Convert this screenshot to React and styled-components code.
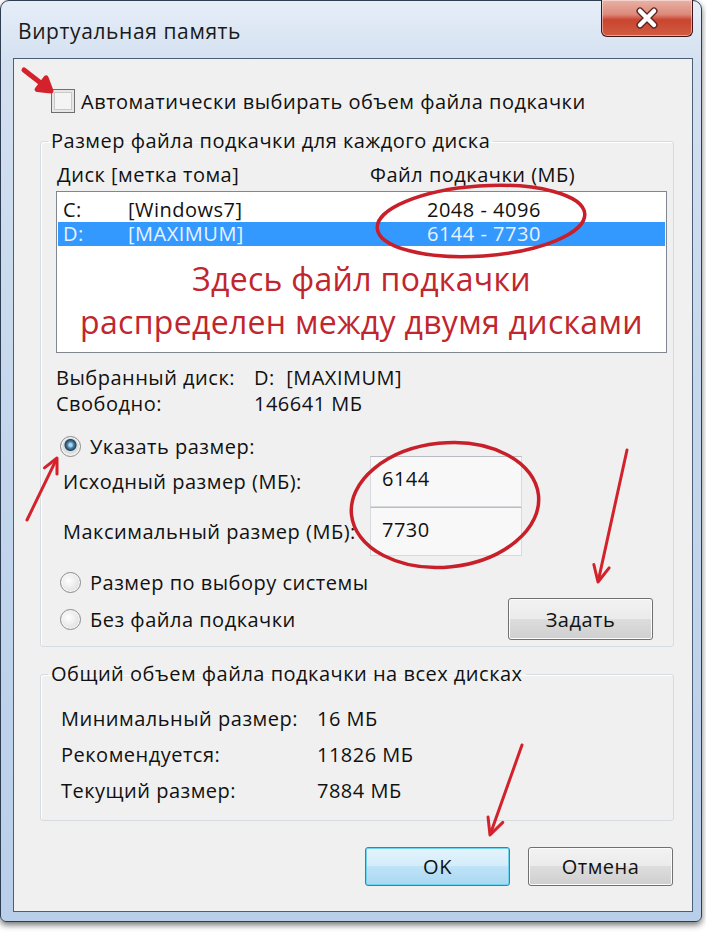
import styled, { createGlobalStyle } from 'styled-components'

const GlobalStyle = createGlobalStyle`
    body {
        margin: 0;
        background: #ffffff;
        font-family: "Open Sans", "Liberation Sans", sans-serif;
    }
`

// Window frame (Aero glass)
const Page = styled.div`
    position: relative;
    width: 706px;
    height: 932px;
`

const Window = styled.div`
    box-sizing: border-box;
    width: 702px;
    height: 922px;
    border: 1px solid #2e3d52;
    border-radius: 9px 9px 6px 6px;
    background: linear-gradient(180deg, #e6eef8 0%, #d3e0f0 7%, #c3d6ec 50%, #b9cfe9 100%);
    box-shadow: 0 3px 6px rgba(0, 0, 0, 0.55);
    padding: 0 8px 9px 12px;
    display: flex;
    flex-direction: column;
`

const TitleBar = styled.div`
    height: 57px;
    display: flex;
    justify-content: space-between;
    align-items: flex-start;
`

const Title = styled.span`
    margin: 16px 0 0 5px;
    font-size: 21px;
    letter-spacing: 0.6px;
    color: #1a1a1a;
`

const CloseButton = styled.div`
    width: 92px;
    height: 37px;
    margin-top: -1px;
    box-sizing: border-box;
    border: 1px solid #40161a;
    border-top: none;
    border-radius: 0 0 6px 6px;
    background: linear-gradient(180deg, #eab2a6 0%, #dc8a7b 40%, #c9452f 55%, #d05c40 100%);
    box-shadow: inset 0 0 0 1px rgba(255, 255, 255, 0.45);
    display: flex;
    align-items: center;
    justify-content: center;
`

const Client = styled.div`
    flex: 1;
    border: 1px solid #4d5f77;
    background: #f0f0f0;
    display: flex;
    flex-direction: column;
    font-size: 20px;
    letter-spacing: 0.5px;
    color: #111;
`

// Controls
const CheckRow = styled.label`
    display: flex;
    align-items: center;
    gap: 6px;
    margin: 30px 0 0 37px;
    height: 24px;
`

const CheckBox = styled.span`
    box-sizing: border-box;
    width: 24px;
    height: 24px;
    border: 1px solid #6f6f6f;
    background: #f4f4f4;
    box-shadow: inset 0 0 0 2px #e6e6e6, inset 0 0 0 3px #c9c9c9;
`

const Group = styled.fieldset`
    margin: ${(p) => p.$top}px 18px 0 26px;
    padding: 0 6px ${(p) => p.$bottom}px 15px;
    border: 1px solid #d5dbe0;
    border-radius: 3px;
    box-shadow: inset 1px 1px 0 #fff;
`

const Legend = styled.legend`
    margin-left: -8px;
    padding: 0 3px;
    height: 24px;
    line-height: 24px;
`

const HeaderRow = styled.div`
    display: grid;
    grid-template-columns: 313px 1fr;
    height: 24px;
    line-height: 24px;
    margin-top: 10px;
    padding-left: 1px;
`

const ListBox = styled.div`
    box-sizing: border-box;
    height: 162px;
    margin-top: 4px;
    border: 1px solid #82878f;
    background: #fff;
    padding: 6px 1px 0;
    display: flex;
    flex-direction: column;
`

const DriveRow = styled.div`
    display: grid;
    grid-template-columns: 65px 299px 1fr;
    height: 24px;
    line-height: 24px;
    padding-left: 5px;
    background: ${(p) => (p.$selected ? '#3399ff' : 'transparent')};
    color: ${(p) => (p.$selected ? '#e8f2ff' : '#111')};
`

const Note = styled.div`
    margin-top: 11px;
    text-align: center;
    font-size: 32px;
    letter-spacing: 0.3px;
    line-height: 43px;
    color: #c0262e;
    text-shadow: 0 0 2px #fff;
`

const InfoGrid = styled.div`
    display: grid;
    grid-template-columns: ${(p) => p.$col}px 1fr;
    grid-auto-rows: ${(p) => p.$row}px;
    align-items: center;
    margin-top: ${(p) => p.$top}px;
    padding-left: ${(p) => p.$left}px;
`

const RadioRow = styled.label`
    display: flex;
    align-items: center;
    gap: 9px;
    height: ${(p) => p.$h || 24}px;
    margin-top: ${(p) => p.$top}px;
    padding-left: ${(p) => p.$left}px;
`

const Radio = styled.span`
    box-sizing: border-box;
    width: 21px;
    height: 21px;
    border-radius: 50%;
    border: 1px solid #8b8b8b;
    background: ${(p) =>
        p.$checked
            ? 'radial-gradient(circle at 50% 42%, #a9d6ee 0 1.5px, #4f89ad 3px, #21435e 5.5px, #dadada 6.5px, #f7f7f7 100%)'
            : 'radial-gradient(circle at 40% 40%, #ffffff 0, #e6e6e6 60%, #cfcfcf 100%)'};
    box-shadow: inset 0 0 0 1px #fafafa;
`

const FieldRow = styled.div`
    display: grid;
    grid-template-columns: 307px 152px;
    align-items: center;
    height: ${(p) => p.$h}px;
    padding-left: 7px;
`

const TextBox = styled.div`
    box-sizing: border-box;
    height: 100%;
    border: 1px solid #d6d9dd;
    border-top-color: #b9bdc3;
    background: #f8f8f8;
    padding: 8px 0 0 11px;
`

const BottomRow = styled.div`
    display: flex;
    justify-content: space-between;
    align-items: center;
    height: 42px;
    margin-top: 4px;
    padding-left: 4px;
`

const Button = styled.button`
    box-sizing: border-box;
    width: 145px;
    height: ${(p) => p.$h || 39}px;
    margin-right: ${(p) => p.$right || 0}px;
    border-radius: 3px;
    font-family: inherit;
    font-size: 20px;
    letter-spacing: 0.5px;
    color: #111;
    border: 1px solid ${(p) => (p.$default ? '#3c7fb1' : '#707070')};
    background: ${(p) =>
        p.$default
            ? 'linear-gradient(180deg, #e5f4fc 0%, #d3ecfa 50%, #bfe3f7 50%, #a9d8f2 100%)'
            : 'linear-gradient(180deg, #f2f2f2 0%, #ebebeb 50%, #dddddd 50%, #cfcfcf 100%)'};
    box-shadow: inset 0 0 0 1px ${(p) => (p.$default ? '#6fd3f2' : '#fcfcfc')};
`

const Footer = styled.div`
    display: flex;
    justify-content: flex-end;
    gap: 18px;
    margin: 26px 19px 0 0;
`

// Red annotations drawn over the screenshot
const Overlay = styled.svg`
    position: absolute;
    left: 0;
    top: 0;
    pointer-events: none;
`

function Arrow({ x1, y1, x2, y2, head = 16, width = 3, filled = false }) {
    const a = Math.atan2(y2 - y1, x2 - x1)
    const s = filled ? 0.55 : 0.45
    const p1 = [x2 - head * Math.cos(a - s), y2 - head * Math.sin(a - s)]
    const p2 = [x2 - head * Math.cos(a + s), y2 - head * Math.sin(a + s)]
    const pts = `${p1[0]},${p1[1]} ${x2},${y2} ${p2[0]},${p2[1]}`
    return (
        <g stroke="#d3222b" strokeWidth={width} strokeLinecap="round" strokeLinejoin="round">
            <line x1={x1} y1={y1} x2={x2 - 4 * Math.cos(a)} y2={y2 - 4 * Math.sin(a)} />
            {filled ? <polygon points={pts} fill="#d3222b" /> : <polyline points={pts} fill="none" />}
        </g>
    )
}

function CloseGlyph() {
    return (
        <svg width="26" height="22" viewBox="0 0 26 22">
            <g strokeLinecap="round">
                <path d="M6 4 L20 18 M20 4 L6 18" stroke="#5a2020" strokeWidth="7" />
                <path d="M6 4 L20 18 M20 4 L6 18" stroke="#ffffff" strokeWidth="4.5" />
            </g>
        </svg>
    )
}

function App() {
    return (
        <Page>
            <GlobalStyle />
            <Window>
                <TitleBar>
                    <Title>Виртуальная память</Title>
                    <CloseButton>
                        <CloseGlyph />
                    </CloseButton>
                </TitleBar>
                <Client>
                    <CheckRow>
                        <CheckBox />
                        Автоматически выбирать объем файла подкачки
                    </CheckRow>

                    <Group $top={16} $bottom={6}>
                        <Legend>Размер файла подкачки для каждого диска</Legend>
                        <HeaderRow>
                            <span>Диск [метка тома]</span>
                            <span>Файл подкачки (МБ)</span>
                        </HeaderRow>
                        <ListBox>
                            <DriveRow>
                                <span>C:</span>
                                <span>[Windows7]</span>
                                <span>2048 - 4096</span>
                            </DriveRow>
                            <DriveRow $selected>
                                <span>D:</span>
                                <span>[MAXIMUM]</span>
                                <span>6144 - 7730</span>
                            </DriveRow>
                            <Note>
                                Здесь файл подкачки
                                <br />
                                распределен между двумя дисками
                            </Note>
                        </ListBox>

                        <InfoGrid $col={198} $row={26} $top={11} $left={0}>
                            <span>Выбранный диск:</span>
                            <span>D:&nbsp; [MAXIMUM]</span>
                            <span>Свободно:</span>
                            <span>146641 МБ</span>
                        </InfoGrid>

                        <RadioRow $top={20} $left={4} $h={20}>
                            <Radio $checked />
                            Указать размер:
                        </RadioRow>
                        <FieldRow $h={51}>
                            <span>Исходный размер (МБ):</span>
                            <TextBox>6144</TextBox>
                        </FieldRow>
                        <FieldRow $h={49}>
                            <span>Максимальный размер (МБ):</span>
                            <TextBox>7730</TextBox>
                        </FieldRow>

                        <RadioRow $top={14} $left={4}>
                            <Radio />
                            Размер по выбору системы
                        </RadioRow>
                        <BottomRow>
                            <RadioRow $top={0} $left={0}>
                                <Radio />
                                Без файла подкачки
                            </RadioRow>
                            <Button $h={42} $right={14}>
                                Задать
                            </Button>
                        </BottomRow>
                    </Group>

                    <Group $top={15} $bottom={12}>
                        <Legend>Общий объем файла подкачки на всех дисках</Legend>
                        <InfoGrid $col={256} $row={36} $top={14} $left={5}>
                            <span>Минимальный размер:</span>
                            <span>16 МБ</span>
                            <span>Рекомендуется:</span>
                            <span>11826 МБ</span>
                            <span>Текущий размер:</span>
                            <span>7884 МБ</span>
                        </InfoGrid>
                    </Group>

                    <Footer>
                        <Button $default>OK</Button>
                        <Button>Отмена</Button>
                    </Footer>
                </Client>
            </Window>

            <Overlay width="706" height="932" viewBox="0 0 706 932">
                <ellipse cx="481" cy="221" rx="104" ry="35" transform="rotate(-4 481 221)" fill="none" stroke="#c8202a" strokeWidth="3.5" />
                <ellipse cx="445" cy="505" rx="94" ry="62" transform="rotate(-6 445 505)" fill="none" stroke="#c8202a" strokeWidth="3.5" />
                <Arrow x1={24} y1={70} x2={51} y2={91} head={14} width={5} filled />
                <Arrow x1={27} y1={520} x2={57} y2={458} head={16} />
                <Arrow x1={627} y1={450} x2={598} y2={582} head={18} />
                <Arrow x1={522} y1={745} x2={490} y2={835} head={18} />
            </Overlay>
        </Page>
    )
}

export default App
